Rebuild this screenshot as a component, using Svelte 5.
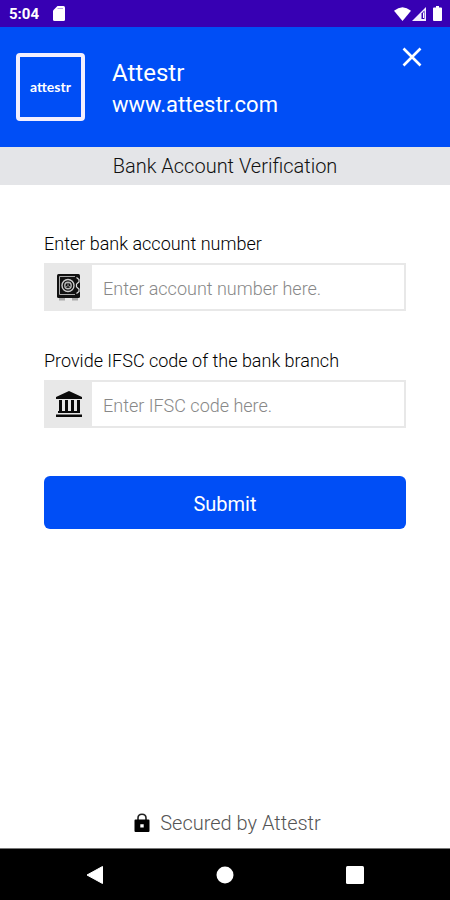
<script>
  let account = $state('');
  let ifsc = $state('');
</script>

<div class="screen">
  <div class="status">
    <span class="time">5:04</span>
    <svg class="card" viewBox="0 0 12 15" width="12" height="15" aria-hidden="true">
      <path d="M4.500 0H10.500Q12 0 12 1.500V13.500Q12 15 10.500 15H1.500Q0 15 0 13.500V4.500Z" fill="#fff" />
      <path d="M4.500 2.500H10" stroke="#b9a3e6" stroke-width="1" />
    </svg>
    <div class="signals">
      <svg viewBox="0 0 17 14" width="17" height="14" aria-hidden="true">
        <path d="M0 3.800Q8.500-3.500 17 3.800L8.500 14Z" fill="#fff" />
      </svg>
      <svg viewBox="0 0 14 14" width="14" height="14" aria-hidden="true">
        <path d="M0 14L14 0V14Z" fill="#f3efff" />
        <path d="M9.500 6.500L12.500 3.500V12H9.500Z" fill="#3700b3" />
        <path d="M11.500 5.500V11" stroke="#fff" stroke-width="1" />
      </svg>
      <svg class="battery" viewBox="0 0 9 15" width="9" height="15" aria-hidden="true">
        <path d="M3 0H6V1.500H8Q9 1.500 9 2.500V14Q9 15 8 15H1Q0 15 0 14V2.500Q0 1.500 1 1.500H3Z" fill="#fff" />
      </svg>
    </div>
  </div>

  <header>
    <div class="logo">attestr</div>
    <div class="brand">
      <span class="name">Attestr</span>
      <span>www.attestr.com</span>
    </div>
    <button class="close" type="button" aria-label="Close">
      <svg viewBox="0 0 20 20" width="20" height="20" aria-hidden="true">
        <path d="M1.500 1.500L18.500 18.500M18.500 1.500L1.500 18.500" stroke="#fff" stroke-width="2.600" />
      </svg>
    </button>
  </header>

  <h1>Bank Account Verification</h1>

  <form onsubmit={(e) => e.preventDefault()}>
    <div class="field">
      <label for="account">Enter bank account number</label>
      <div class="box">
        <span class="icon">
          <svg viewBox="0 0 28 28" width="28" height="28" aria-hidden="true">
            <path d="M4 25H10V27.500H4ZM17 25H23V27.500H17Z" fill="#aaa" />
            <rect x="2" y="1" width="23" height="24" rx="1.500" fill="#111" />
            <path d="M20 3.500H4.500V21.500H20" fill="none" stroke="#aaa" stroke-width="1" />
            <circle cx="13" cy="12.500" r="6" fill="#111" stroke="#ccc" stroke-width="1.400" />
            <circle cx="13" cy="12.500" r="3.200" fill="none" stroke="#bbb" stroke-width="1.400" />
            <path d="M13 10V12.500L11 14M13 12.500L15 14" fill="none" stroke="#aaa" stroke-width=".8" />
            <path d="M21.500 4.500L24 6.500V9L21.500 11M21.500 14L24 16V18.500L21.500 20.500M21.500 11V14" fill="none" stroke="#ddd" stroke-width="1.200" />
          </svg>
        </span>
        <input id="account" type="text" placeholder="Enter account number here." bind:value={account} />
      </div>
    </div>

    <div class="field">
      <label for="ifsc">Provide IFSC code of the bank branch</label>
      <div class="box">
        <span class="icon">
          <svg viewBox="0 0 28 28" width="28" height="28" aria-hidden="true">
            <path d="M14 1L27 7V9H1V7ZM4 10H7V22H4ZM10 10H13V22H10ZM16 10H19V22H16ZM22 10H25V22H22ZM3 21H25V23H3ZM1 24.500H27V27H1Z" fill="#0b0b0b" />
          </svg>
        </span>
        <input id="ifsc" type="text" placeholder="Enter IFSC code here." bind:value={ifsc} />
      </div>
    </div>

    <button class="submit" type="submit">Submit</button>
  </form>

  <footer>
    <svg viewBox="0 0 16 20" width="16" height="20" aria-hidden="true">
      <path d="M4 8V5Q4 1.200 8 1.200T12 5V8" fill="none" stroke="#222" stroke-width="1.600" />
      <path d="M1.500 6.500H14.500Q15.500 6.500 15.500 7.500V18Q15.500 19 14.500 19H1.500Q.5 19 .5 18V7.500Q.5 6.500 1.500 6.500ZM6.300 11.200V14.500H9.700V11.200Z" fill="#000" fill-rule="evenodd" />
    </svg>
    <span>Secured by Attestr</span>
  </footer>

  <nav>
    <button type="button" aria-label="Back">
      <svg viewBox="0 0 18 18" width="18" height="18" aria-hidden="true">
        <path d="M16.500 .5V17.500L1 9Z" fill="#fff" stroke="#fff" stroke-linejoin="round" />
      </svg>
    </button>
    <button type="button" aria-label="Home">
      <svg viewBox="0 0 18 18" width="18" height="18" aria-hidden="true">
        <circle cx="9" cy="9" r="8.500" fill="#fff" />
      </svg>
    </button>
    <button type="button" aria-label="Recent apps">
      <svg viewBox="0 0 18 18" width="18" height="18" aria-hidden="true">
        <rect width="18" height="18" rx="1.500" fill="#fff" />
      </svg>
    </button>
  </nav>
</div>

<style>
  :global(body) {
    margin: 0;
  }
  .screen {
    display: flex;
    flex-direction: column;
    min-height: 100vh;
    background: #fff;
    font-family: Roboto, sans-serif;
  }
  .screen * {
    box-sizing: border-box;
  }
  svg {
    display: block;
    flex: none;
  }
  button {
    border: 0;
    padding: 0;
    background: none;
    font-family: inherit;
    cursor: pointer;
  }
  .status {
    display: flex;
    align-items: center;
    height: 27px;
    padding: 0 8px 0 9px;
    background: #3700b3;
    color: #fff;
  }
  .time {
    font-size: 15px;
    font-weight: 700;
  }
  .card {
    margin-left: 14px;
  }
  .signals {
    display: flex;
    align-items: center;
    gap: 1px;
    margin-left: auto;
  }
  .battery {
    margin-left: 6px;
  }
  header {
    display: flex;
    align-items: center;
    height: 120px;
    padding: 0 28px 0 16px;
    background: #004ef6;
    color: #fff;
  }
  .logo {
    display: flex;
    align-items: center;
    justify-content: center;
    width: 69px;
    height: 68px;
    padding-bottom: 2px;
    border: 4px solid #f3efff;
    border-radius: 4px;
    font-family: Lato, sans-serif;
    font-size: 14px;
    font-weight: 700;
  }
  .brand {
    display: flex;
    flex-direction: column;
    margin-left: 27px;
    padding-top: 4px;
    font-size: 22px;
    line-height: 32px;
  }
  .name {
    font-size: 24px;
  }
  .close {
    align-self: flex-start;
    margin: 20px 0 0 auto;
  }
  h1 {
    margin: 0;
    padding-top: 1px;
    background: #e4e5e8;
    color: #111;
    font-size: 20px;
    font-weight: 300;
    line-height: 37px;
    text-align: center;
  }
  form {
    display: flex;
    flex-direction: column;
    padding: 49px 44px 0;
  }
  .field {
    margin-bottom: 40px;
  }
  label {
    display: block;
    margin-bottom: 9px;
    color: #000;
    font-size: 18px;
    font-weight: 300;
    line-height: 20px;
  }
  .box {
    display: flex;
    height: 48px;
    border: 2px solid #e8e8e8;
  }
  .icon {
    display: flex;
    align-items: center;
    justify-content: center;
    width: 46px;
    background: #e8e8e8;
  }
  input {
    flex: 1;
    min-width: 0;
    border: 0;
    padding: 2px 11px 0;
    background: #fff;
    color: #222;
    font-family: inherit;
    font-size: 18px;
    font-weight: 300;
  }
  input::placeholder {
    color: #888;
  }
  .submit {
    height: 53px;
    margin-top: 8px;
    padding-top: 2px;
    border-radius: 6px;
    background: #004ef6;
    color: #fff;
    font-size: 20px;
  }
  footer {
    display: flex;
    align-items: center;
    justify-content: center;
    gap: 10px;
    margin-top: auto;
    padding: 0 0 13px 5px;
    color: #555;
    font-size: 20px;
    font-weight: 300;
    line-height: 24px;
  }
  nav {
    display: flex;
    align-items: center;
    justify-content: space-between;
    height: 52px;
    padding: 0 86px;
    border-top: 1px solid #777;
    background: #000;
  }
</style>
